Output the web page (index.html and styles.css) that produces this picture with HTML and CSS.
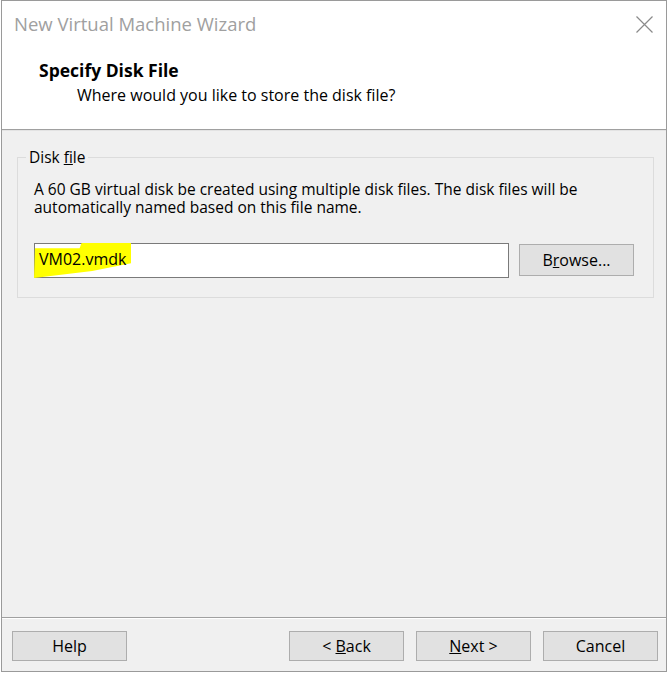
FILE: index.html
```html
<html>
    <head>
        <title>New Virtual Machine Wizard</title>
        <link rel="stylesheet" href="styles.css">
    </head>
    <body>
        <div class="window">
            <div class="titlebar">
                <span class="title">New Virtual Machine Wizard</span>
                <svg class="close" width="17" height="17" viewBox="0 0 17 17">
                    <path d="M0.5 0.5 L16.5 16.5 M16.5 0.5 L0.5 16.5" stroke="#8a8a8a" stroke-width="1.2" fill="none"/>
                </svg>
            </div>
            <div class="header">
                <div class="heading">Specify Disk File</div>
                <div class="subheading">Where would you like to store the disk file?</div>
            </div>
            <div class="content">
                <fieldset class="group">
                    <legend>Disk <u>f</u>ile</legend>
                    <p class="desc">A 60 GB virtual disk be created using multiple disk files. The disk files will be automatically named based on this file name.</p>
                    <div class="file-row">
                        <div class="field">
                            <!-- marker highlight drawn over the field -->
                            <span class="marker"></span>
                            <span class="value">VM02.vmdk</span>
                        </div>
                        <button class="btn browse">B<u>r</u>owse...</button>
                    </div>
                </fieldset>
            </div>
            <div class="footer">
                <button class="btn">Help</button>
                <div class="spacer"></div>
                <button class="btn">&lt; <u>B</u>ack</button>
                <button class="btn"><u>N</u>ext &gt;</button>
                <button class="btn">Cancel</button>
            </div>
        </div>
    </body>
</html>
```

FILE: styles.css
```css
body {
    margin: 0;
    background: #ffffff;
    font-family: "Open Sans", "Noto Sans", sans-serif;
    font-size: 15.5px;
    color: #000;
}
.window {
    margin-left: 1px;
    width: 666px;
    height: 672px;
    box-sizing: border-box;
    border: 1px solid #9a9a9a;
    display: flex;
    flex-direction: column;
    background: #f0f0f0;
}
.titlebar {
    background: #fff;
    height: 47px;
    display: flex;
    align-items: flex-start;
    justify-content: space-between;
    padding: 11px 13px 0 12px;
    box-sizing: border-box;
}
.title {
    font-size: 18.5px;
    color: #a0a0a0;
    line-height: 24px;
}
.close {
    margin-top: 4px;
}
.header {
    background: #fff;
    height: 82px;
    padding: 12px 0 0 37px;
    box-sizing: border-box;
    border-bottom: 1px solid #a0a0a0;
    box-shadow: 0 1px 0 #e3e3e3;
}
.heading {
    font-weight: bold;
    font-size: 17.5px;
    line-height: 20px;
}
.subheading {
    padding-left: 38px;
    font-size: 16px;
    line-height: 20px;
    margin-top: 5px;
}
.content {
    flex: 1;
    padding: 17px 12px 0 15px;
}
.group {
    margin: 0;
    border: 1px solid #dcdcdc;
    padding: 13px 19px 19px 16px;
}
.group legend {
    margin-left: -8px;
    padding: 0 3px;
    line-height: 20px;
    font-size: 15.5px;
}
.desc {
    margin: 0;
    line-height: 18px;
}
.file-row {
    display: flex;
    align-items: flex-start;
    gap: 10px;
    margin-top: 27px;
}
.field {
    position: relative;
    flex: 1;
    height: 35px;
    box-sizing: border-box;
    border: 1px solid #7a7a7a;
    background: #fff;
    display: flex;
    align-items: center;
    padding-left: 4px;
}
.marker {
    position: absolute;
    left: -1px;
    top: -1px;
    width: 97px;
    height: 35px;
    background: #ffff00;
    clip-path: polygon(1% 15%, 47% 15%, 49% 0, 100% 0, 100% 58%, 60% 80%, 0 100%);
}
.value {
    position: relative;
    top: -2px;
    font-size: 16px;
}
.btn {
    width: 115px;
    height: 30px;
    background: #e1e1e1;
    border: 1px solid #adadad;
    font-family: "Open Sans", "Noto Sans", sans-serif;
    font-size: 16px;
    color: #000;
    padding: 0;
}
.browse {
    height: 32px;
    margin-top: 1px;
}
.footer {
    display: flex;
    gap: 12px;
    padding: 13px 8px 10px 10px;
    border-top: 1px solid #a0a0a0;
    box-shadow: inset 0 1px 0 #ffffff;
}
.spacer {
    flex: 1;
}
```
